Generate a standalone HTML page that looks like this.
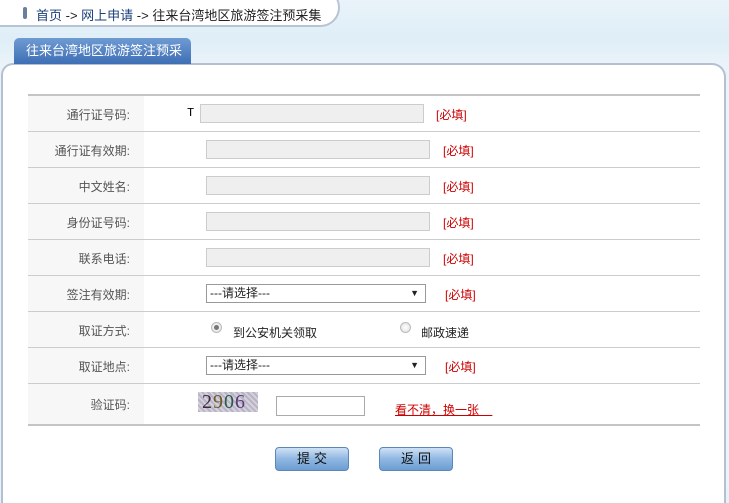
<!DOCTYPE html>
<html><head><meta charset="utf-8"><style>
*{margin:0;padding:0;box-sizing:border-box}
body{width:729px;height:488px;position:relative;overflow:hidden;font-family:"Liberation Sans","Noto Sans CJK SC",sans-serif;font-size:12px;background:linear-gradient(180deg,#e9f3f9 0,#dfeef7 40px,#eaf3f9 64px);}
.a{position:absolute}
.crumb{left:-20px;top:-12px;width:360px;height:39px;border:2px solid #b8c4d4;border-radius:20px;background:#fff}
.tab{left:14px;top:38px;width:177px;height:26px;border-radius:5px 5px 0 0;background:linear-gradient(#6f9bd3,#3e6fb5);color:#fff;font-size:13px;line-height:25px;padding-left:12px}
.box{left:1px;top:63px;width:725px;height:440px;background:#fff;border:2px solid #b4c0d2;border-radius:12px 14px 0 0;border-bottom:none}
.lbl{left:28px;width:116px;background:#f7f7f7}
.ln{left:28px;width:672px;height:1px;background:#ccc}
.in{height:19px;background:#efefef;border:1px solid #ccc}
.req{color:#c00;font-size:12px}
.sel{width:220px;height:19px;border:1px solid #999;background:#fff;font-size:12px;line-height:17px;padding-left:3px;color:#222}
.sel:after{content:"▼";position:absolute;right:6px;top:0;font-size:9px}
.btn{width:74px;height:24px;border:1px solid #5d86b7;border-radius:4px;background:linear-gradient(#cfe2f5,#8fb7e2 50%,#6c9dd3);text-align:center;line-height:22px;font-size:13px;color:#111;letter-spacing:4px;padding-left:4px}
.rad{width:11px;height:11px;border-radius:50%;border:1px solid #bbb;background:radial-gradient(#fff,#ddd)}
.l{left:28px;width:102px;text-align:right;color:#555}
</style></head><body>
<div class="a crumb"></div>
<div class="a" style="left:23px;top:7px;width:4px;height:12px;background:#6a7f9c;border-radius:2px"></div>
<div class="a" style="left:36px;top:5px;font-size:13px;color:#222"><span style="color:#1a3f7a">首页</span> -&gt; <span style="color:#1a3f7a">网上申请</span> -&gt; 往来台湾地区旅游签注预采集</div>
<div class="a box"></div>
<div class="a tab">往来台湾地区旅游签注预采集</div>

<div class="a lbl" style="top:96px;height:329px"></div>
<div class="a" style="left:28px;top:94px;width:672px;height:2px;background:#c4c4c4"></div>
<div class="a ln" style="top:131px"></div>
<div class="a ln" style="top:167px"></div>
<div class="a ln" style="top:203px"></div>
<div class="a ln" style="top:239px"></div>
<div class="a ln" style="top:275px"></div>
<div class="a ln" style="top:311px"></div>
<div class="a ln" style="top:347px"></div>
<div class="a ln" style="top:383px"></div>
<div class="a" style="left:28px;top:424px;width:672px;height:2px;background:#c4c4c4"></div>

<div class="a l" style="top:106px">通行证号码:</div>
<div class="a l" style="top:142px">通行证有效期:</div>
<div class="a l" style="top:178px">中文姓名:</div>
<div class="a l" style="top:214px">身份证号码:</div>
<div class="a l" style="top:250px">联系电话:</div>
<div class="a l" style="top:286px">签注有效期:</div>
<div class="a l" style="top:322px">取证方式:</div>
<div class="a l" style="top:358px">取证地点:</div>
<div class="a l" style="top:396px">验证码:</div>

<div class="a" style="left:187px;top:106px;font-family:'Liberation Mono',monospace;font-size:12px">T</div>
<div class="a in" style="left:200px;top:104px;width:224px"></div><div class="a req" style="left:436px;top:106px">[必填]</div>
<div class="a in" style="left:206px;top:140px;width:224px"></div><div class="a req" style="left:443px;top:142px">[必填]</div>
<div class="a in" style="left:206px;top:176px;width:224px"></div><div class="a req" style="left:443px;top:178px">[必填]</div>
<div class="a in" style="left:206px;top:212px;width:224px"></div><div class="a req" style="left:443px;top:214px">[必填]</div>
<div class="a in" style="left:206px;top:248px;width:224px"></div><div class="a req" style="left:443px;top:250px">[必填]</div>
<div class="a sel" style="left:206px;top:284px">---请选择---</div><div class="a req" style="left:445px;top:286px">[必填]</div>
<div class="a rad" style="left:211px;top:322px"><div style="width:5px;height:5px;border-radius:50%;background:#777;margin:2px"></div></div>
<div class="a" style="left:233px;top:324px;color:#222">到公安机关领取</div>
<div class="a rad" style="left:400px;top:322px"></div>
<div class="a" style="left:421px;top:324px;color:#222">邮政速递</div>
<div class="a sel" style="left:206px;top:356px">---请选择---</div><div class="a req" style="left:445px;top:358px">[必填]</div>
<div class="a" style="left:198px;top:392px;width:60px;height:20px;background:repeating-linear-gradient(45deg,#b8b4c4 0 2px,#d4d0dc 2px 4px);font-family:'Liberation Serif',serif;font-size:20px;line-height:20px;letter-spacing:1px;padding-left:4px"><span style="color:#3a2a3a">2</span><span style="color:#6a5a2a">9</span><span style="color:#2a5a4a">0</span><span style="color:#5a3a7a">6</span></div>
<div class="a" style="left:276px;top:396px;width:89px;height:20px;border:1px solid #aaa;background:#fff"></div>
<div class="a" style="left:395px;top:401px;color:#c00;text-decoration:underline">看不清，换一张<span style="color:#00c">&nbsp;&nbsp;&nbsp;&nbsp;</span></div>

<div class="a btn" style="left:275px;top:447px">提交</div>
<div class="a btn" style="left:379px;top:447px">返回</div>
</body></html>
